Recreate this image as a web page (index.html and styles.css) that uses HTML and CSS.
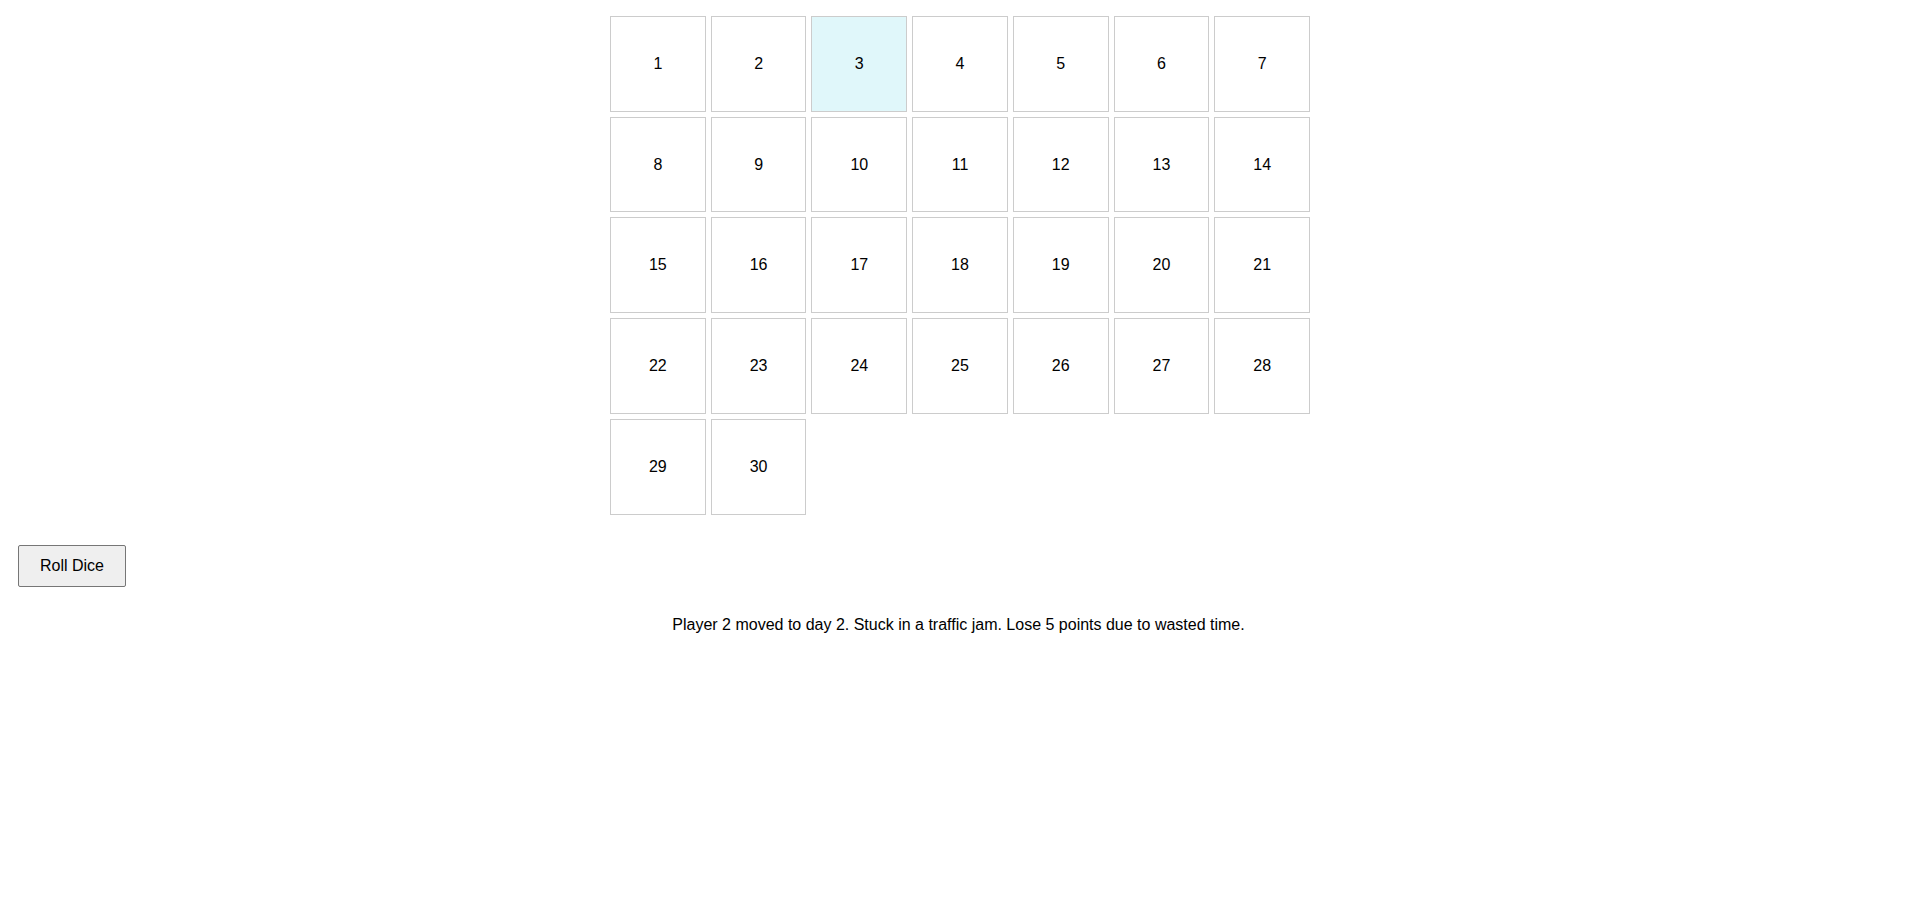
FILE: index.html
```html
<!DOCTYPE html>
<html>
<head>
<meta charset="utf-8">
<link rel="stylesheet" href="styles.css">
</head>
<body>
<div class="board">
  <div class="day">1</div><div class="day">2</div><div class="day active">3</div><div class="day">4</div><div class="day">5</div><div class="day">6</div><div class="day">7</div>
  <div class="day">8</div><div class="day">9</div><div class="day">10</div><div class="day">11</div><div class="day">12</div><div class="day">13</div><div class="day">14</div>
  <div class="day">15</div><div class="day">16</div><div class="day">17</div><div class="day">18</div><div class="day">19</div><div class="day">20</div><div class="day">21</div>
  <div class="day">22</div><div class="day">23</div><div class="day">24</div><div class="day">25</div><div class="day">26</div><div class="day">27</div><div class="day">28</div>
  <div class="day">29</div><div class="day">30</div>
</div>
<button class="roll">Roll Dice</button>
<p class="message">Player 2 moved to day 2. Stuck in a traffic jam. Lose 5 points due to wasted time.</p>
</body>
</html>
```
FILE: styles.css
```css
body {
  margin: 0;
  padding: 8px 8px 8px 11px;
  font-family: "Liberation Sans", Arial, sans-serif;
  font-size: 16px;
  color: #000;
  background: #fff;
}
.board {
  display: grid;
  grid-template-columns: repeat(7, 1fr);
  gap: 5px;
  width: 700px;
  margin: 8px auto 30px;
}
.day {
  aspect-ratio: 1 / 1;
  border: 1px solid #ccc;
  display: flex;
  align-items: center;
  justify-content: center;
  box-sizing: border-box;
}
.day.active {
  background: #e0f7fa;
}
.roll {
  display: block;
  margin: 0 0 0 7px;
  padding: 11px 21px;
  font-family: "Liberation Sans", Arial, sans-serif;
  font-size: 16px;
  background: #efefef;
  border: 1px solid #767676;
  border-radius: 2px;
  color: #000;
}
.message {
  text-align: center;
  margin: 29px 0 0 -3px;
}
```
